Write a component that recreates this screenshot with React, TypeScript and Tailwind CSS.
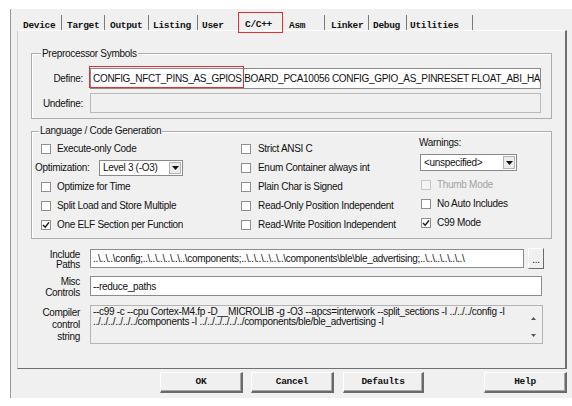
import React from "react";

const sans = "font-['Liberation_Sans',Arial,sans-serif] text-[10px] tracking-[-0.3px] text-[#111]";
const mono = "font-['Liberation_Mono','Courier_New',monospace] text-[9.5px] font-bold text-[#111]";

function Box({ checked, disabled }: { checked?: boolean; disabled?: boolean }) {
  return (
    <span
      className={
        disabled
          ? "w-[10px] h-[10px] shrink-0 border border-[#c8c8c8] bg-[#f4f4f4]"
          : "w-[10px] h-[10px] shrink-0 border border-[#8f8f8f] bg-white flex items-center justify-center"
      }
    >
      {checked && (
        <svg width="8" height="8" viewBox="0 0 8 8">
          <path d="M1 4 L3.2 6.2 L7 1.4" stroke="#1a1a1a" strokeWidth="1.5" fill="none" />
        </svg>
      )}
    </span>
  );
}

function Check({ label, checked, disabled, wide }: { label: string; checked?: boolean; disabled?: boolean; wide?: boolean }) {
  return (
    <div className={wide ? "h-[19px] flex items-center gap-[7px]" : "h-[19px] flex items-center gap-[6px]"}>
      <Box checked={checked} disabled={disabled} />
      <span className={disabled ? "text-[#a3a3a3]" : ""}>{label}</span>
    </div>
  );
}

function Arrow() {
  return (
    <svg width="7" height="4" viewBox="0 0 7 4">
      <path d="M0 0 H7 L3.5 4 Z" fill="#111" />
    </svg>
  );
}

function Select({ value, className }: { value: string; className: string }) {
  return (
    <div className={`${className} bg-white border border-[#8a8a8a] flex items-stretch`}>
      <span className="flex-1 pl-[3px] flex items-center whitespace-nowrap overflow-hidden">{value}</span>
      <span className="w-[12px] my-[1px] mr-[1px] border border-[#b4b4b4] bg-[#ececec] flex items-center justify-center">
        <Arrow />
      </span>
    </div>
  );
}

function Group({ title, className, labelClass, children }: { title: string; className: string; labelClass: string; children: React.ReactNode }) {
  return (
    <div className={`${className} relative border border-[#adadad] shadow-[inset_1px_1px_0_#fff]`}>
      <span className={`${labelClass} absolute px-[1px] bg-[#f0f0f0] leading-[12px] whitespace-nowrap`}>{title}</span>
      {children}
    </div>
  );
}

function Btn({ label, className }: { label: string; className: string }) {
  return (
    <div
      className={`${className} h-[21px] pt-[1px] bg-[#f0f0f0] border-t border-l border-t-white border-l-white border-r-2 border-b-2 border-r-[#6a6a6a] border-b-[#6a6a6a] shadow-[inset_-1px_-1px_0_#a8a8a8] flex items-center justify-center ${mono}`}
    >
      {label}
    </div>
  );
}

const tabs = [
  { label: "Device", cls: "w-[44px] pl-[5px] border-r border-[#7a7a7a]" },
  { label: "Target", cls: "w-[43px] pl-[5px] border-r border-[#7a7a7a]" },
  { label: "Output", cls: "w-[44px] pl-[5px] border-r border-[#7a7a7a]" },
  { label: "Listing", cls: "w-[49px] pl-[4px] border-r border-[#7a7a7a]" },
  { label: "User", cls: "w-[40px] pl-[4px]" },
];

const tabsRight = [
  { label: "Asm", cls: "w-[41px] pl-[5px] border-r border-[#7a7a7a]" },
  { label: "Linker", cls: "w-[44px] pl-[6px] border-r border-[#7a7a7a]" },
  { label: "Debug", cls: "w-[38px] pl-[4px] border-r border-[#7a7a7a]" },
  { label: "Utilities", cls: "w-[66px] pl-[3px] border-r border-[#7a7a7a]" },
];

export default function App() {
  return (
    <div className={`w-[572px] h-[406px] bg-white overflow-hidden pt-[9px] pl-[10px] ${sans}`}>
      <div className="h-[389px] border-l border-[#9a9a9a] bg-[#f0f0f0] flex flex-col">
        {/* tab strip */}
        <div className={`h-[21px] flex items-end pl-[7px] ${mono}`}>
          {tabs.map((t) => (
            <div key={t.label} className={`${t.cls} h-[15px] flex items-center pt-[7px] whitespace-nowrap`}>
              {t.label}
            </div>
          ))}
          <div className="relative z-10 w-[45px] h-[21px] -mb-[3px] border-[1.5px] border-[#e3312f] pl-[6px] pt-[6px] flex items-center">
            C/C++
          </div>
          <div className="w-[1px]" />
          {tabsRight.map((t) => (
            <div key={t.label} className={`${t.cls} h-[15px] flex items-center pt-[7px] whitespace-nowrap`}>
              {t.label}
            </div>
          ))}
        </div>

        {/* tab panel */}
        <div className="ml-[6px] w-[550px] h-[339px] border-t border-l border-t-white border-l-[#cdcdcd] border-r-2 border-b border-r-[#707070] border-b-[#707070] flex flex-col">
          <Group title="Preprocessor Symbols" labelClass="-top-[6px] left-[9px]" className="ml-[13px] mt-[22px] w-[521px] h-[66px]">
            <div className="pt-[14px] flex flex-col gap-[4px]">
              <div className="flex items-center">
                <span className="w-[51px] text-right">Define:</span>
                <div className="relative ml-[7px] w-[451px] h-[21px] bg-white border border-[#8c8c8c] flex items-center pl-[2px]">
                  <span className="whitespace-nowrap overflow-hidden w-full">
                    CONFIG_NFCT_PINS_AS_GPIOS BOARD_PCA10056 CONFIG_GPIO_AS_PINRESET FLOAT_ABI_HARD NRF52840_XXAA
                  </span>
                  <span className="absolute -left-[2px] -top-[3px] w-[155px] h-[22px] border-[1.5px] border-[#e3312f]" />
                </div>
              </div>
              <div className="flex items-center">
                <span className="w-[51px] text-right">Undefine:</span>
                <div className="ml-[7px] w-[451px] h-[20px] bg-[#f0f0f0] border border-[#b9b9b9]" />
              </div>
            </div>
          </Group>

          <Group title="Language / Code Generation" labelClass="-top-[7px] left-[7px]" className="ml-[13px] mt-[12px] w-[521px] h-[108px]">
            <div className="pt-[7px] flex">
              <div className="w-[209px] flex flex-col">
                <div className="pl-[9px]">
                  <Check label="Execute-only Code" />
                </div>
                <div className="h-[19px] flex items-center pl-[3px]">
                  <span className="w-[64px]">Optimization:</span>
                  <Select value="Level 3 (-O3)" className="w-[84px] h-[16px]" />
                </div>
                <div className="pl-[9px]">
                  <Check label="Optimize for Time" />
                  <Check label="Split Load and Store Multiple" />
                  <Check label="One ELF Section per Function" checked />
                </div>
              </div>
              <div className="w-[178px] flex flex-col">
                <Check wide label="Strict ANSI C" />
                <Check wide label="Enum Container always int" />
                <Check wide label="Plain Char is Signed" />
                <Check wide label="Read-Only Position Independent" />
                <Check wide label="Read-Write Position Independent" />
              </div>
              <div className="flex flex-col -mt-[2px]">
                <span className="leading-[12px]">Warnings:</span>
                <Select value="<unspecified>" className="mt-[5px] ml-[1px] w-[97px] h-[17px]" />
                <div className="mt-[4px] pl-[2px]">
                  <Check label="Thumb Mode" disabled />
                  <Check label="No Auto Includes" />
                  <Check label="C99 Mode" checked />
                </div>
              </div>
            </div>
          </Group>

          {/* include / misc / compiler */}
          <div className="mt-[9px] h-[20px] flex items-center">
            <span className="self-start pt-[2px] w-[62px] text-right leading-[10px]">
              Include
              <br />
              Paths
            </span>
            <div className="ml-[10px] w-[434px] h-[19px] bg-white border border-[#8c8c8c] flex items-center pl-[2px] overflow-hidden whitespace-nowrap">
              ..\..\..\config;..\..\..\..\..\..\components;..\..\..\..\..\..\components\ble\ble_advertising;..\..\..\..\..\..\
            </div>
            <div className="ml-[4px] w-[16px] h-[21px] bg-[#f0f0f0] border-t border-l border-t-white border-l-white border-r border-b border-r-[#6a6a6a] border-b-[#6a6a6a] flex items-end justify-center pb-[4px] leading-[8px]">
              ...
            </div>
          </div>

          <div className="mt-[8px] h-[20px] flex items-center">
            <span className="self-start w-[62px] text-right leading-[11px]">
              Misc
              <br />
              Controls
            </span>
            <div className="ml-[10px] w-[452px] h-[20px] bg-white border border-[#8c8c8c] flex items-center pl-[2px] whitespace-nowrap">
              --reduce_paths
            </div>
          </div>

          <div className="mt-[9px] flex">
            <span className="pt-[2px] w-[62px] text-right leading-[12px]">
              Compiler
              <br />
              control
              <br />
              string
            </span>
            <div className="ml-[10px] w-[453px] h-[39px] bg-[#f0f0f0] border border-[#b4b4b4] flex">
              <div className="flex-1 pl-[2px] pt-[1px] leading-[10px] whitespace-nowrap overflow-hidden">
                --c99 -c --cpu Cortex-M4.fp -D__MICROLIB -g -O3 --apcs=interwork --split_sections -I ../../../config -I
                <br />
                ../../../../../../components -I ../../../../../../components/ble/ble_advertising -I
              </div>
              <div className="w-[17px] flex flex-col items-center justify-between pt-[11px] pb-[6px]">
                <svg width="5" height="3" viewBox="0 0 5 3">
                  <path d="M0 3 H5 L2.5 0 Z" fill="#555" />
                </svg>
                <svg width="5" height="3" viewBox="0 0 5 3">
                  <path d="M0 0 H5 L2.5 3 Z" fill="#555" />
                </svg>
              </div>
            </div>
          </div>
        </div>

        {/* dialog buttons */}
        <div className="mt-[3px] ml-[149px] flex">
          <Btn label="OK" className="w-[83px]" />
          <Btn label="Cancel" className="ml-[8px] w-[83px]" />
          <Btn label="Defaults" className="ml-[9px] w-[81px]" />
          <Btn label="Help" className="ml-[60px] w-[83px]" />
        </div>
      </div>
    </div>
  );
}
